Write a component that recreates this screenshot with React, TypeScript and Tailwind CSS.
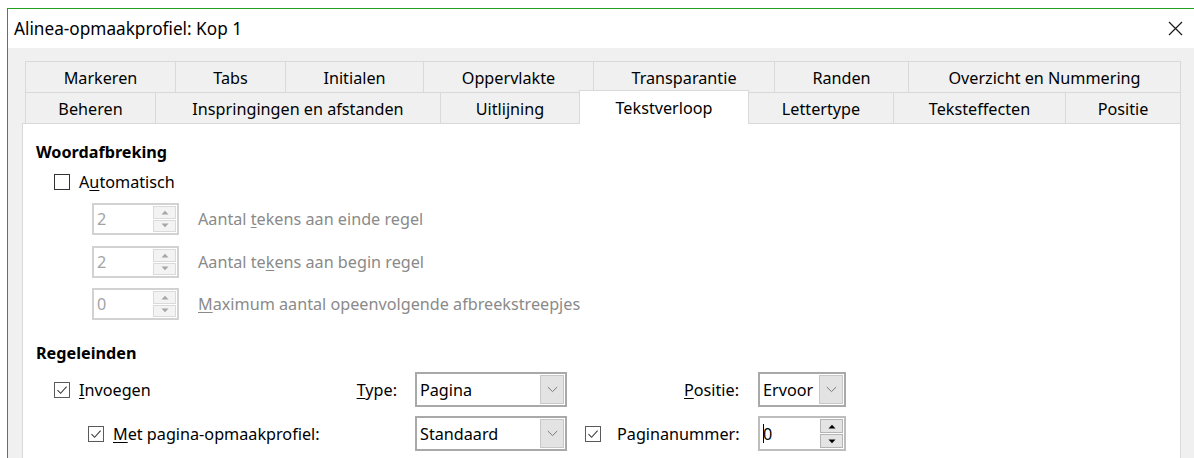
import React from "react";

const FONT = { fontFamily: '"Noto Sans", "Open Sans", sans-serif' };

type Tab = { label: string; w: string; active?: boolean; noLeft?: boolean; last?: boolean };

const row1: Tab[] = [
  { label: "Markeren", w: "w-[150px]" },
  { label: "Tabs", w: "w-[110px]" },
  { label: "Initialen", w: "w-[138px]" },
  { label: "Oppervlakte", w: "w-[170px]" },
  { label: "Transparantie", w: "w-[181px]" },
  { label: "Randen", w: "w-[134px]" },
  { label: "Overzicht en Nummering", w: "w-[273px]", last: true },
];

const row2: Tab[] = [
  { label: "Beheren", w: "w-[130px]" },
  { label: "Inspringingen en afstanden", w: "w-[285px]" },
  { label: "Uitlijning", w: "w-[139px]" },
  { label: "Tekstverloop", w: "w-[170px]", active: true },
  { label: "Lettertype", w: "w-[144px]", noLeft: true },
  { label: "Teksteffecten", w: "w-[172px]" },
  { label: "Positie", w: "w-[116px]", last: true },
];

function TabButton({ t }: { t: Tab }) {
  if (t.active) {
    return (
      <div
        className={`${t.w} relative z-10 -mt-[2px] flex h-[34px] shrink-0 items-start justify-center border-x border-t border-[#d9d9d9] bg-white pt-[7px] text-black`}
      >
        {t.label}
      </div>
    );
  }
  return (
    <div
      className={`${t.w} flex h-[31px] shrink-0 items-center justify-center border-t border-[#d9d9d9] bg-[#f0f0f0] pt-px text-black ${
        t.noLeft ? "" : "border-l"
      } ${t.last ? "border-r" : ""}`}
    >
      {t.label}
    </div>
  );
}

function CheckBox({ checked }: { checked?: boolean }) {
  return (
    <div
      className={`flex h-[16px] w-[16px] shrink-0 items-center justify-center border bg-white ${
        checked ? "border-[#5a5a5a]" : "border-[#333333]"
      }`}
    >
      {checked && (
        <svg width="12" height="12" viewBox="0 0 12 12">
          <path d="M1.5 6.2 L4.6 9.3 L10.6 2.6" fill="none" stroke="#3c3c3c" strokeWidth="1.1" />
        </svg>
      )}
    </div>
  );
}

function Arrow({ up, color }: { up?: boolean; color: string }) {
  return (
    <svg width="8" height="5" viewBox="0 0 8 5">
      {up ? <path d="M0.5 4.5 L4 0.8 L7.5 4.5 Z" fill={color} /> : <path d="M0.5 0.5 L4 4.2 L7.5 0.5 Z" fill={color} />}
    </svg>
  );
}

function SpinBox({ value, disabled, caret, w }: { value: string; disabled?: boolean; caret?: boolean; w: string }) {
  const border = disabled ? "border-[#d2d2d2]" : "border-[#bdbdbd]";
  const btnBorder = disabled ? "border-[#dadada]" : "border-[#b4b4b4]";
  const btnBg = disabled ? "bg-[#f3f3f3]" : "bg-[#e4e4e4]";
  const arrow = disabled ? "#a6a6a6" : "#000000";
  return (
    <div className={`${w} flex shrink-0 items-stretch border-2 ${border} bg-white`}>
      <div className={`relative flex flex-1 items-center pl-[3px] ${disabled ? "text-[#a3a3a3]" : "text-black"}`}>
        {caret && <span className="absolute left-[3px] top-[6px] h-[19px] w-px bg-black" />}
        {value}
      </div>
      <div className="flex w-[24px] flex-col gap-px py-px pr-px">
        <div className={`flex flex-1 items-center justify-center border ${btnBorder} ${btnBg}`}>
          <Arrow up color={arrow} />
        </div>
        <div className={`flex flex-1 items-center justify-center border ${btnBorder} ${btnBg}`}>
          <Arrow color={arrow} />
        </div>
      </div>
    </div>
  );
}

function ComboBox({ value, w }: { value: string; w: string }) {
  return (
    <div className={`${w} flex h-[35px] shrink-0 items-stretch border-2 border-[#a9a9a9] bg-white`}>
      <div className="flex flex-1 items-center pl-[3px] text-black">{value}</div>
      <div className="m-px flex w-[24px] items-center justify-center border border-[#c8c8c8] bg-[#e3e3e3]">
        <svg width="11" height="7" viewBox="0 0 11 7">
          <path d="M0.8 1 L5.5 5.6 L10.2 1" fill="none" stroke="#7a7a7a" strokeWidth="1" />
        </svg>
      </div>
    </div>
  );
}

function SpinRow({ value, children }: { value: string; children: React.ReactNode }) {
  return (
    <div className="flex h-[32px] items-center pl-[56px]">
      <SpinBox value={value} disabled w="w-[87px] h-[32px]" />
      <span className="ml-[19px] text-[#8a8a8a]">{children}</span>
    </div>
  );
}

export default function App() {
  return (
    <div className="h-[458px] w-[1194px] overflow-hidden bg-white pl-[7px] pt-[8px] text-[16.2px] leading-[20px]" style={FONT}>
      <div className="flex h-[460px] flex-col border-l border-t border-[#21a21f]">
        {/* title bar */}
        <div className="flex h-[39px] shrink-0 items-center justify-between bg-white pl-[6px] pr-[11px]">
          <span className="text-[17.2px] text-black">Alinea-opmaakprofiel: Kop 1</span>
          <svg width="15" height="15" viewBox="0 0 15 15">
            <path d="M1 1 L14 14 M14 1 L1 14" stroke="#1a1a1a" strokeWidth="1.2" />
          </svg>
        </div>

        {/* dialog body */}
        <div className="flex flex-1 flex-col bg-[#f0f0f0] pl-[14px] pt-[13px]">
          <div className="ml-[3px] flex">
            {row1.map((t) => (
              <TabButton key={t.label} t={t} />
            ))}
          </div>
          <div className="ml-[3px] flex h-[31px]">
            {row2.map((t) => (
              <TabButton key={t.label} t={t} />
            ))}
          </div>

          {/* page content */}
          <div className="flex w-[1159px] flex-1 flex-col border border-[#d9d9d9] bg-white pl-[13px] pt-[18px]">
            <div className="h-[20px] font-bold text-black">Woordafbreking</div>
            <div className="mt-[10px] flex h-[20px] items-center pl-[18px]">
              <CheckBox />
              <span className="ml-[9px] text-black">
                A<u className="underline-offset-2">u</u>tomatisch
              </span>
            </div>

            <div className="mt-[11px]">
              <SpinRow value="2">
                Aantal <u className="underline-offset-2">t</u>ekens aan einde regel
              </SpinRow>
            </div>
            <div className="mt-[11px]">
              <SpinRow value="2">
                Aantal te<u className="underline-offset-2">k</u>ens aan begin regel
              </SpinRow>
            </div>
            <div className="mt-[10px]">
              <SpinRow value="0">
                <u className="underline-offset-2">M</u>aximum aantal opeenvolgende afbreekstreepjes
              </SpinRow>
            </div>

            <div className="mt-[23px] h-[20px] font-bold text-black">Regeleinden</div>

            <div className="mt-[9px] flex h-[35px] items-center">
              <div className="flex w-[379px] items-center pl-[18px]">
                <CheckBox checked />
                <span className="ml-[9px] text-black">
                  <u className="underline-offset-2">I</u>nvoegen
                </span>
                <span className="ml-auto pr-[18px] text-black">
                  <u className="underline-offset-2">T</u>ype:
                </span>
              </div>
              <ComboBox value="Pagina" w="w-[152px]" />
              <div className="flex w-[191px] justify-end pr-[19px] text-black">
                <span>
                  <u className="underline-offset-2">P</u>ositie:
                </span>
              </div>
              <ComboBox value="Ervoor" w="w-[88px]" />
            </div>

            <div className="mt-[9px] flex h-[35px] items-center">
              <div className="flex w-[379px] items-center pl-[52px]">
                <CheckBox checked />
                <span className="ml-[9px] text-black">
                  <u className="underline-offset-2">M</u>et pagina-opmaakprofiel:
                </span>
              </div>
              <ComboBox value="Standaard" w="w-[152px]" />
              <div className="flex w-[191px] items-center pl-[18px]">
                <CheckBox checked />
                <span className="ml-[16px] text-black">
                  Pa<u className="underline-offset-2">g</u>inanummer:
                </span>
              </div>
              <SpinBox value="0" caret w="w-[88px] h-[35px]" />
            </div>
          </div>
        </div>
      </div>
    </div>
  );
}
